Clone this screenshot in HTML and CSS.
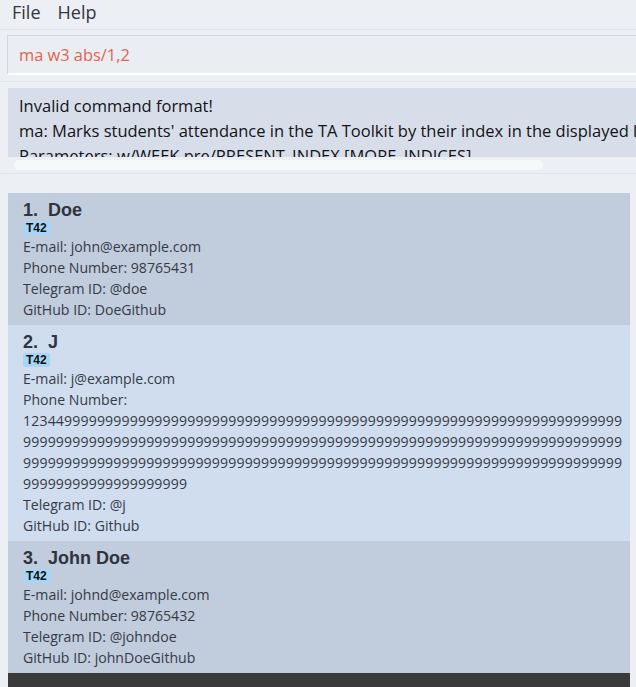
FILE: index.html
```html
<!DOCTYPE html>
<html lang="en">
<head>
<meta charset="utf-8">
<title>TA Toolkit</title>
<link rel="stylesheet" href="styles.css">
</head>
<body>
<div class="app">
  <nav class="menubar">
    <span class="menu-item">File</span>
    <span class="menu-item">Help</span>
  </nav>

  <section class="command-pane">
    <div class="command-box">ma w3 abs/1,2</div>
  </section>

  <section class="result-pane">
    <div class="result-box">
      <p class="result-line">Invalid command format!</p>
      <p class="result-line">ma: Marks students' attendance in the TA Toolkit by their index in the displayed list.</p>
      <p class="result-line">Parameters: w/WEEK pre/PRESENT_INDEX [MORE_INDICES]</p>
    </div>
    <div class="hscroll"><div class="hscroll-thumb"></div></div>
  </section>

  <section class="list-pane">
    <article class="card card-dark">
      <h2 class="card-title">1.  Doe</h2>
      <div class="tags"><span class="tag">T42</span></div>
      <p class="field">E-mail: john@example.com</p>
      <p class="field">Phone Number: 98765431</p>
      <p class="field">Telegram ID: @doe</p>
      <p class="field">GitHub ID: DoeGithub</p>
    </article>
    <article class="card card-light">
      <h2 class="card-title">2.  J</h2>
      <div class="tags"><span class="tag">T42</span></div>
      <p class="field">E-mail: j@example.com</p>
      <p class="field">Phone Number: <span class="long-number">12344999999999999999999999999999999999999999999999999999999999999999999999999999999999999999999999999999999999999999999999999999999999999999999999999999999999999999999999999999999999999999999999999999999999999999999999999999999999999999999</span></p>
      <p class="field">Telegram ID: @j</p>
      <p class="field">GitHub ID: Github</p>
    </article>
    <article class="card card-dark">
      <h2 class="card-title">3.  John Doe</h2>
      <div class="tags"><span class="tag">T42</span></div>
      <p class="field">E-mail: johnd@example.com</p>
      <p class="field">Phone Number: 98765432</p>
      <p class="field">Telegram ID: @johndoe</p>
      <p class="field">GitHub ID: johnDoeGithub</p>
    </article>
  </section>

  <div class="statusbar"></div>
</div>
</body>
</html>
```

FILE: styles.css
```css
html, body {
  margin: 0;
  padding: 0;
}

body {
  background: #eceff4;
  width: 636px;
  height: 687px;
  overflow: hidden;
  font-family: "Open Sans", "Noto Sans", sans-serif;
  color: #2b2f36;
}

.app {
  display: flex;
  flex-direction: column;
  height: 687px;
}

.menubar {
  height: 24px;
  padding-bottom: 5px;
  display: flex;
  align-items: center;
  gap: 17px;
  padding-left: 12px;
  border-bottom: 1px solid #e2e6ec;
  font-size: 18px;
  color: #33363b;
  flex: none;
}

.command-pane {
  padding: 5px 0 6px 7px;
  border-bottom: 1px solid #e2e6ec;
  flex: none;
}

.command-box {
  height: 37px;
  border-top: 1px solid #d3d7de;
  border-left: 1px solid #d3d7de;
  border-bottom: 2px solid #ffffff;
  background: #eaedf2;
  display: flex;
  align-items: center;
  padding-left: 11px;
  font-size: 16.4px;
  color: #e0654f;
  white-space: nowrap;
}

.result-pane {
  padding: 6px 0 0 8px;
  border-bottom: 1px solid #e2e6ec;
  height: 92px;
  box-sizing: border-box;
  flex: none;
}

.result-box {
  height: 69px;
  overflow: hidden;
  background: #d8dee9;
  padding: 5px 0 0 11px;
  box-sizing: border-box;
  white-space: nowrap;
}

.result-line {
  margin: 0;
  font-size: 16.5px;
  line-height: 25px;
  color: #111418;
}

.hscroll {
  padding: 3px 0 0 6px;
}

.hscroll-thumb {
  width: 529px;
  height: 10px;
  border-radius: 5px;
  background: #f7f8fa;
}

.list-pane {
  padding: 19px 6px 0 8px;
  display: flex;
  flex-direction: column;
  flex: none;
}

.card {
  padding: 6px 5px 5px 15px;
}

.card-dark {
  background: #c1ccdd;
}

.card-light {
  background: #d0ddee;
}

.card-title {
  margin: 0;
  font-family: "Liberation Sans", Arial, sans-serif;
  font-weight: bold;
  font-size: 18px;
  line-height: 22px;
  color: #2e3440;
  white-space: pre;
}

.tags {
  display: flex;
  margin-bottom: 1px;
}

.tag {
  display: inline-block;
  height: 14px;
  line-height: 14px;
  padding: 0 3px;
  border-radius: 2px;
  background: #a6d6f7;
  font-family: "Liberation Sans", Arial, sans-serif;
  font-weight: bold;
  font-size: 12px;
  color: #111;
}

.field {
  margin: 0;
  font-size: 14.1px;
  line-height: 21px;
  color: #353b46;
  overflow-wrap: anywhere;
}

.long-number {
  letter-spacing: 0.15px;
}

.statusbar {
  margin: 0 6px 0 8px;
  flex: 1;
  background: #3a3a3a;
}
```
